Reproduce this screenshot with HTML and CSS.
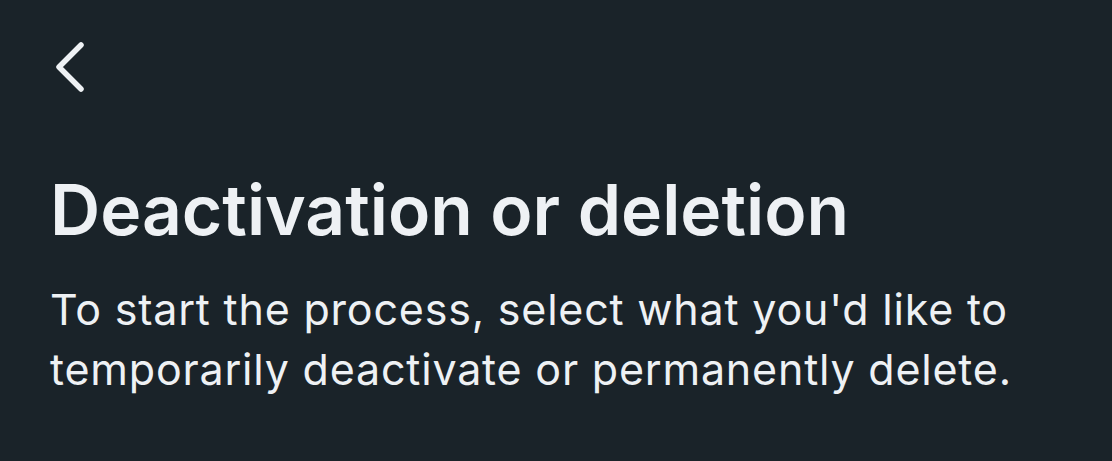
FILE: index.html
```html
<!DOCTYPE html>
<html>
<head>
<meta charset="utf-8">
<link rel="stylesheet" href="styles.css">
</head>
<body>
<div class="screen">
  <div class="topbar">
    <button class="back" aria-label="Back">
      <svg width="40" height="56" viewBox="0 0 40 56">
        <path d="M31 5 L9 27 L31 49" fill="none" stroke="#eef1f4" stroke-width="5.5" stroke-linecap="round" stroke-linejoin="round"/>
      </svg>
    </button>
  </div>
  <h1 class="title">Deactivation or deletion</h1>
  <p class="desc">To start the process, select what you'd like to temporarily deactivate or permanently delete.</p>
</div>
</body>
</html>
```
FILE: styles.css
```css
html, body {
  margin: 0;
  padding: 0;
  background: #1a2329;
}
.screen {
  width: 1112px;
  height: 461px;
  box-sizing: border-box;
  padding: 40px 50px 0 50px;
  font-family: Inter, "Noto Sans", sans-serif;
  color: #eef1f4;
  overflow: hidden;
}
.topbar {
  height: 56px;
  display: flex;
  align-items: center;
}
.back {
  background: none;
  border: 0;
  padding: 0;
  display: block;
  cursor: pointer;
}
.back svg { display: block; }
.title {
  margin: 74px 0 0 0;
  font-size: 69.5px;
  font-weight: 600;
  line-height: 80px;
  letter-spacing: 0;
}
.desc {
  margin: 29px 0 0 0;
  font-size: 43px;
  font-weight: 400;
  line-height: 60px;
  letter-spacing: 0.8px;
  max-width: 1010px;
}
```
